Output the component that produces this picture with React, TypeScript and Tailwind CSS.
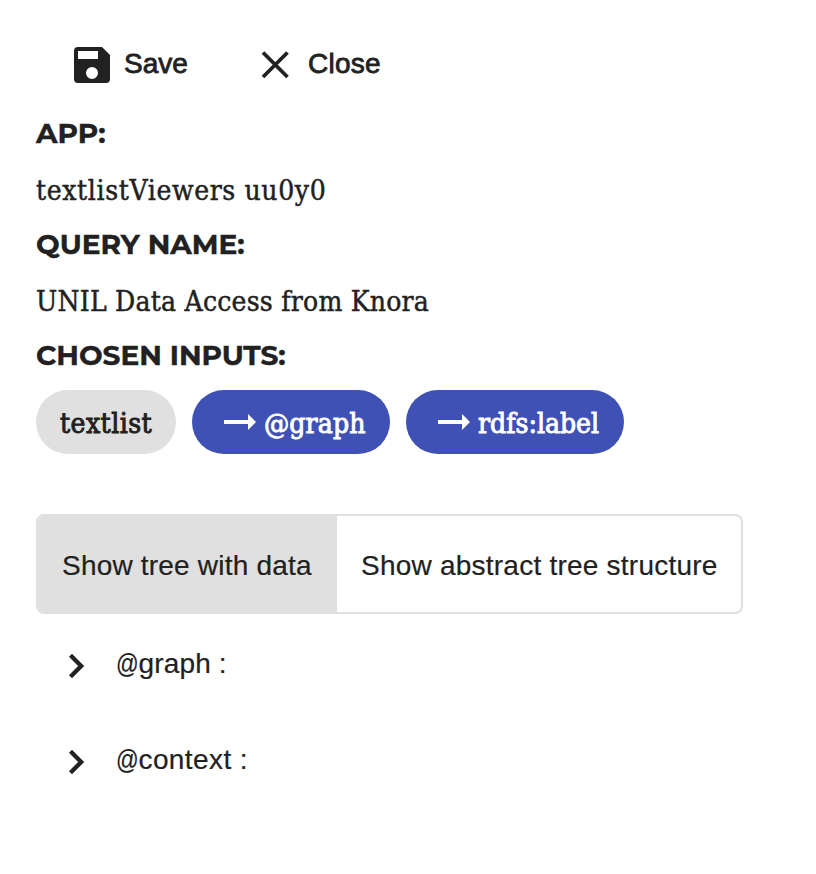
import type { ReactNode } from "react";

const slab = "font-['Roboto_Slab','DejaVu_Serif_Condensed','DejaVu_Serif',serif] [font-stretch:condensed]";

function Heading({ children }: { children: ReactNode }) {
  return (
    <h2 className="h-[34px] font-['Montserrat','Inter',sans-serif] text-[28px] leading-[34px] font-bold whitespace-nowrap [-webkit-text-stroke:0.4px_currentColor]">
      {children}
    </h2>
  );
}

function Value({ children, tracking }: { children: ReactNode; tracking: string }) {
  return (
    <p className={`mt-6 mb-[19px] h-[34px] whitespace-nowrap text-[28px] leading-[34px] [-webkit-text-stroke:0.45px_currentColor] ${slab} ${tracking}`}>
      {children}
    </p>
  );
}

function Arrow() {
  return (
    <svg className="size-12 shrink-0" viewBox="0 0 24 24" fill="currentColor">
      <path d="M16.01 11H4v2h12.01v3L20 12l-3.99-4z" />
    </svg>
  );
}

function PathChip({ label, width, tracking }: { label: string; width: string; tracking: string }) {
  return (
    <div className={`flex h-16 items-center rounded-full bg-[#3f51b5] pl-6 text-white ${width}`}>
      <Arrow />
      <span className={`mt-[3px] whitespace-nowrap text-[28px] leading-[34px] [-webkit-text-stroke:0.9px_currentColor] ${slab} ${tracking}`}>{label}</span>
    </div>
  );
}

function TreeRow({ name, tracking }: { name: string; tracking: string }) {
  return (
    <li className="flex h-24 items-center">
      <svg className="mt-2 size-12" viewBox="0 0 24 24" fill="currentColor" stroke="currentColor" strokeWidth="0.2">
        <path d="M10 6 8.59 7.41 13.17 12l-4.58 4.59L10 18l6-6z" />
      </svg>
      <span className={`mt-[3px] ml-4 flex whitespace-nowrap ${tracking}`}>
        <span className="w-[22.5px] origin-left scale-x-[0.8]">@</span>
        <span>{name} :</span>
      </span>
    </li>
  );
}

export default function App() {
  return (
    <main className="h-[874px] w-[816px] overflow-hidden bg-white px-9 pt-[27px] font-['Liberation_Sans',Arial,sans-serif] text-[28px] leading-8 text-[#212121] [-webkit-text-stroke:0.2px_currentColor]">
      <div className="flex h-[72px] items-center pl-8 [-webkit-text-stroke:0.8px_currentColor]">
        <button className="flex items-center">
          <svg className="mt-1 size-12" viewBox="0 0 24 24" fill="currentColor">
            <path fillRule="evenodd" d="M17 3H5a2 2 0 0 0-2 2v14a2 2 0 0 0 2 2h14a2 2 0 0 0 2-2V7zM5 5h10v4H5zM12 13a3 3 0 1 1 0 6a3 3 0 0 1 0-6z" />
          </svg>
          <span className="mt-[2px] ml-2 w-[64px] text-left whitespace-nowrap">Save</span>
        </button>
        <button className="ml-16 flex items-center">
          <svg className="mt-1 size-12" viewBox="0 0 48 48" fill="none" stroke="currentColor" strokeWidth="3.8">
            <path d="M11 11.5 35.5 36M35.5 11.5 11 36" />
          </svg>
          <span className="mt-[2px] ml-2 tracking-[0.25px] whitespace-nowrap">Close</span>
        </button>
      </div>

      <section className="mt-[17px]">
        <Heading>APP:</Heading>
        <Value tracking="tracking-[0.62px]">textlistViewers uu0y0</Value>
        <Heading>QUERY NAME:</Heading>
        <Value tracking="tracking-[0.22px]">UNIL Data Access from Knora</Value>
        <Heading>CHOSEN INPUTS:</Heading>
      </section>

      <div className="mt-[18px] flex gap-4">
        <div className={`flex h-16 w-[140px] items-center rounded-full bg-[#e0e0e0] pt-[3px] pl-6 text-[28px] leading-[34px] tracking-[0.45px] [-webkit-text-stroke:0.9px_currentColor] ${slab}`}>
          textlist
        </div>
        <PathChip label="@graph" width="w-[198px]" tracking="tracking-[0.15px]" />
        <PathChip label="rdfs:label" width="w-[218px]" tracking="tracking-[0px]" />
      </div>

      <div className="mt-[60px] flex h-[100px] w-[707px] overflow-hidden rounded-lg border-2 border-[#e0e0e0]">
        <button className="w-[299px] bg-[#e0e0e0] pt-[3px] pl-6 text-left tracking-[0.2px] whitespace-nowrap">Show tree with data</button>
        <button className="flex-1 pt-[3px] pl-6 text-left tracking-[0.23px] whitespace-nowrap">Show abstract tree structure</button>
      </div>

      <ul className="pl-4">
        <TreeRow name="graph" tracking="tracking-[0.15px]" />
        <TreeRow name="context" tracking="tracking-[0.4px]" />
      </ul>
    </main>
  );
}
